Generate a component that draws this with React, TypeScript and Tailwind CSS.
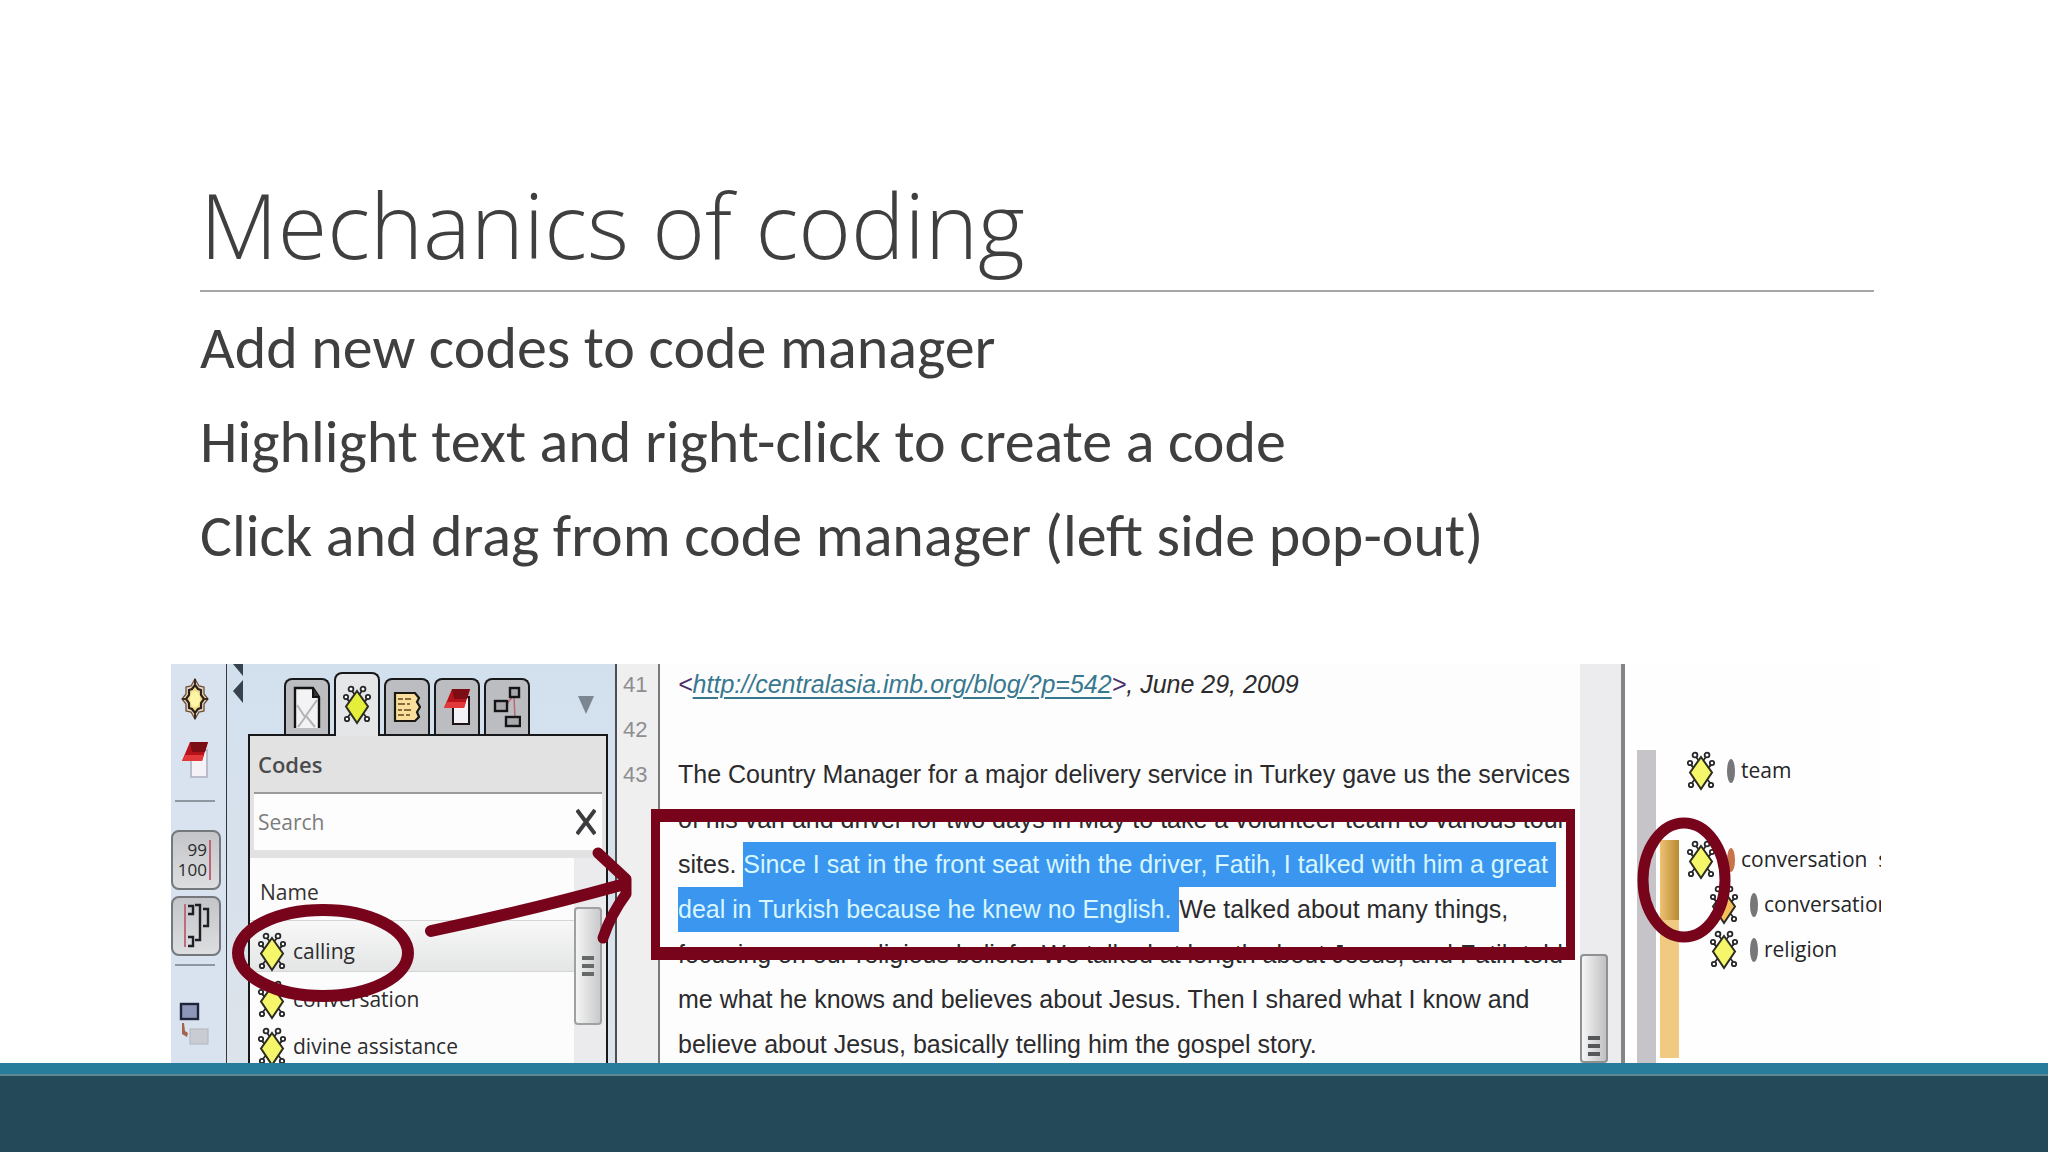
import React from "react";

function CodeIcon({ fill = "#f6f66a" }: { fill?: string }) {
  return (
    <svg viewBox="0 0 28 40" className="h-10 w-7 shrink-0" aria-hidden="true">
      <g fill="#fff" stroke="#26262a" strokeWidth="1.8">
        <path d="M9 6l4 5M19 6l-4 5M3 13l5 5M25 13l-5 5M4 33l5-6M24 33l-5-6" />
        <circle cx="8" cy="4" r="2.4" />
        <circle cx="20" cy="4" r="2.4" />
        <circle cx="3" cy="12" r="2.2" />
        <circle cx="25" cy="12" r="2.2" />
        <circle cx="4" cy="34" r="2.2" />
        <circle cx="24" cy="34" r="2.2" />
      </g>
      <path d="M14 6L25 21.500L14 38L3 21.500Z" fill={fill} stroke="#2c2c22" strokeWidth="2" />
    </svg>
  );
}

function FlowerIcon() {
  return (
    <svg viewBox="0 0 28 42" className="h-[42px] w-7" aria-hidden="true">
      <path d="M14 1L18 8L23 9L23 16L27 21L23 26L23 33L18 34L14 41L10 34L5 33L5 26L1 21L5 16L5 9L10 8Z" fill="#ead9c0" stroke="#6d4f3a" strokeWidth="1.3" />
      <path d="M14 7L17 11L20 12L20 17L23 21L20 25L20 30L17 31L14 35L11 31L8 30L8 25L5 21L8 17L8 12L11 11Z" fill="#f3dc8c" stroke="#2b211b" strokeWidth="2.2" />
      <ellipse cx="14" cy="21" rx="5" ry="8" fill="#fdf6a6" />
      <path d="M14 1V7M14 35V41M1 21H5M23 21H27" stroke="#3a2a20" strokeWidth="2" />
    </svg>
  );
}

function BookIcon({ dark = false }: { dark?: boolean }) {
  return (
    <svg viewBox="0 0 28 40" className="h-10 w-7" aria-hidden="true">
      <rect x="10" y="10" width="16" height="27" fill="#f4f2f6" stroke={dark ? "#1d1416" : "#b9bccb"} strokeWidth="2" />
      <path d="M9 2H27L21 21H1Z" fill="#b5121b" />
      <path d="M9 2H27L24 12H11Z" fill="#7d0d14" />
      <path d="M4 15H23L21 21H1Z" fill="#e2383a" />
    </svg>
  );
}

function PageIcon() {
  return (
    <svg viewBox="0 0 28 42" className="h-[42px] w-7" aria-hidden="true">
      <path d="M2 42V2H20L26 11V42" fill="#f3f3f5" stroke="#141414" strokeWidth="2.4" />
      <path d="M20 2V11H26" fill="#333" stroke="#141414" strokeWidth="2" />
      <path d="M4 19L12 31L24 14M13 30L5 41M13 30L22 41" fill="none" stroke="#b4b4b8" strokeWidth="2" />
    </svg>
  );
}

function MemoIcon() {
  return (
    <svg viewBox="0 0 28 32" className="h-8 w-7" aria-hidden="true">
      <path d="M2 2H22L26 7L24 11L27 16L24 21L26 26L22 30H2Z" fill="#fadf9d" stroke="#1c1812" strokeWidth="2.2" />
      <path d="M5 8h5m2 0h6M5 13h7m2 0h3M5 19h4m2 0h7M5 24h6m2 0h4" stroke="#8c6b3a" strokeWidth="1.8" />
    </svg>
  );
}

function NetworkIcon() {
  return (
    <svg viewBox="0 0 28 42" className="h-[42px] w-7" aria-hidden="true">
      <path d="M14 18L20 10M21 11L22 32" stroke="#b86a72" strokeWidth="1.5" fill="none" />
      <g fill="#a9a9ae" stroke="#151515" strokeWidth="2.4">
        <rect x="17" y="2" width="9" height="9" />
        <rect x="2" y="15" width="12" height="10" />
        <rect x="13" y="31" width="14" height="9" />
      </g>
    </svg>
  );
}

function BracketIcon() {
  return (
    <svg viewBox="0 0 30 46" className="h-[46px] w-[30px]" aria-hidden="true">
      <path d="M4 1V44" stroke="#c06a7c" strokeWidth="2" />
      <path d="M7 3H12V11H7M7 34H12V43H7M14 2H19V37H14M22 6H27V23H22" fill="none" stroke="#1f1f24" strokeWidth="2.4" />
    </svg>
  );
}

function LinkIcon() {
  return (
    <svg viewBox="0 0 30 44" className="h-11 w-[30px]" aria-hidden="true">
      <rect x="2" y="2" width="17" height="15" fill="#8d97b8" stroke="#20243a" strokeWidth="2.4" />
      <path d="M3 21l2 0 1 8 3 2-1 4-5-3z" fill="#a5654d" />
      <rect x="11" y="27" width="18" height="15" fill="#c9ccd2" stroke="#b4b6bd" />
    </svg>
  );
}

const tabs = [
  { label: "Documents", icon: <PageIcon />, active: false },
  { label: "Codes", icon: <CodeIcon fill="#e6ee3c" />, active: true },
  { label: "Memos", icon: <MemoIcon />, active: false },
  { label: "Books", icon: <BookIcon dark />, active: false },
  { label: "Networks", icon: <NetworkIcon />, active: false },
];

const codes = ["calling", "conversation", "divine assistance"];

function Toolbar() {
  return (
    <nav className="flex w-14 shrink-0 flex-col items-start border-r border-[#33383d] bg-[#d8e3ef]" aria-label="Tools">
      <button aria-label="Code manager" className="mt-3.5 ml-2.5"><FlowerIcon /></button>
      <button aria-label="Memo manager" className="mt-5 ml-2.5"><BookIcon /></button>
      <hr className="mt-5 ml-1 w-10 border-t-2 border-[#8d979f]" />
      <button className="mt-7 flex h-[60px] w-[50px] items-center justify-end rounded-lg border-2 border-[#74777b] bg-gradient-to-b from-[#c3c5c8] to-[#dcdee0] pr-2">
        <span className="border-r-2 border-[#c0637a] pr-0.5 text-right font-['Open_Sans',sans-serif] text-[17px] leading-5 text-[#2a2a2c]">
          99<br />100
        </span>
      </button>
      <button aria-label="Margin brackets" className="mt-1.5 flex h-[60px] w-[50px] items-center justify-center rounded-lg border-2 border-[#74777b] bg-gradient-to-b from-[#c3c5c8] to-[#dcdee0]">
        <BracketIcon />
      </button>
      <hr className="mt-2 ml-1 w-10 border-t-2 border-[#8d979f]" />
      <button aria-label="Link" className="mt-9 ml-2"><LinkIcon /></button>
    </nav>
  );
}

function CodeManager() {
  return (
    <section className="flex w-[390px] shrink-0 border-r-2 border-[#4a4f54] bg-gradient-to-b from-[#d2e0ee] to-[#dde3ea]">
      <div className="w-[21px] shrink-0">
        <svg viewBox="0 0 10 40" className="ml-1.5 h-10 w-2.5" aria-hidden="true">
          <path d="M0 0H10V12ZM10 16V39L0 27Z" fill="#36434f" />
        </svg>
      </div>
      <div className="flex w-[360px] flex-col">
        <div className="flex h-[70px] shrink-0 items-end pl-9">
          <div role="tablist" className="flex items-end gap-1">
            {tabs.map((t) => (
              <button
                key={t.label}
                role="tab"
                aria-label={t.label}
                aria-selected={t.active}
                className={
                  t.active
                    ? "z-10 -mb-0.5 flex h-16 w-[46px] items-center justify-center rounded-t-lg border-2 border-b-0 border-[#17181a] bg-[#e4e6e8]"
                    : "flex h-14 w-[46px] items-center justify-center rounded-t-lg border-2 border-b-0 border-[#17181a] bg-[#bcbdc0]"
                }
              >
                {t.icon}
              </button>
            ))}
          </div>
          <button aria-label="More" className="mb-5 ml-12">
            <svg viewBox="0 0 16 18" className="h-[18px] w-4" aria-hidden="true"><path d="M0 0H16L8 18Z" fill="#7b8690" /></svg>
          </button>
        </div>
        <div className="flex flex-1 flex-col border-2 border-b-0 border-[#17181a] bg-[#e2e2e3] font-['Open_Sans',sans-serif]">
          <h2 className="mx-1 h-[58px] border-b-2 border-[#9a9a9c] pl-1 text-[22px] leading-[56px] font-semibold text-[#4a4b4d]">Codes</h2>
          <div className="mx-1 flex h-14 items-center justify-between bg-[#fdfdfd] pr-1.5 pl-1">
            <input aria-label="Search" placeholder="Search" className="w-60 bg-transparent pt-0.5 text-[21px] text-[#777] outline-none placeholder:text-[#7c7c7c]" />
            <button aria-label="Clear search">
              <svg viewBox="0 0 20 28" className="h-7 w-5" aria-hidden="true"><path d="M1 2L19 26M19 2L1 26" stroke="#3c3c3e" strokeWidth="4" /></svg>
            </button>
          </div>
          <div className="mt-2 flex flex-1">
            <div className="flex-1 bg-[#fcfcfc]">
              <div className="h-[62px] pl-2.5 text-[21px] leading-[68px] text-[#333]">Name</div>
              <ul className="text-[21px] text-[#2c2c2e]">
                {codes.map((c, i) => (
                  <li
                    key={c}
                    className={
                      i === 0
                        ? "flex h-[52px] items-center gap-[7px] border-y border-[#d4d6d6] bg-gradient-to-b from-[#f8f8f8] to-[#e4e5e5] pt-3 pl-2"
                        : "flex h-[47px] items-center gap-[7px] pt-2 pl-2"
                    }
                  >
                    <CodeIcon />
                    <span>{c}</span>
                  </li>
                ))}
              </ul>
            </div>
            <div className="w-8 bg-[#ebebed] pt-[49px]">
              <div className="flex h-[118px] w-7 flex-col items-center justify-center gap-1 rounded-sm border-2 border-[#9fa0a2] bg-gradient-to-r from-[#f4f4f4] to-[#c9cacc]">
                <i className="h-1 w-3 bg-[#66686a]" />
                <i className="h-1 w-3 bg-[#66686a]" />
                <i className="h-1 w-3 bg-[#66686a]" />
              </div>
            </div>
          </div>
        </div>
      </div>
    </section>
  );
}

function DocumentPane() {
  return (
    <section className="flex w-[1008px] shrink-0 bg-[#fdfdfd] font-['Liberation_Sans',sans-serif]">
      <ol className="-mt-0.5 w-[43px] shrink-0 border-r-2 border-[#77787a] bg-[#efeff0] pl-1.5 text-[22px] leading-[45px] text-[#8e8e90]">
        <li>41</li>
        <li>42</li>
        <li>43</li>
      </ol>
      <article className="-mt-0.5 w-[920px] pl-[18px] text-[25px] leading-[45px] whitespace-nowrap text-[#2b2b2d]">
        <p className="italic">
          <span className="text-[#4b2f6b]">&lt;</span>
          <a href="#post" className="text-[#38788f] underline decoration-2 underline-offset-4">http://centralasia.imb.org/blog/?p=542</a>
          <span className="text-[#4b2f6b]">&gt;</span>, June 29, 2009
        </p>
        <p className="mt-[45px]">The Country Manager for a major delivery service in Turkey gave us the services</p>
        <p>of his van and driver for two days in May to take a volunteer team to various tour</p>
        <p>
          sites. <mark className="inline-block bg-[#3a96ee] pr-2 align-top text-[#d8f6ff]">Since I sat in the front seat with the driver, Fatih, I talked with him a great</mark>
        </p>
        <p>
          <mark className="inline-block bg-[#3a96ee] pr-2 align-top text-[#d8f6ff]">deal in Turkish because he knew no English.</mark>We talked about many things,
        </p>
        <p>focusing on our religious beliefs. We talked at length about Jesus, and Fatih told</p>
        <p>me what he knows and believes about Jesus. Then I shared what I know and</p>
        <p>believe about Jesus, basically telling him the gospel story.</p>
      </article>
      <div className="flex w-[45px] shrink-0 flex-col border-r-4 border-[#858587] bg-[#ececee] pt-[290px]">
        <div className="flex h-36 w-7 flex-col items-center gap-1 rounded-sm border-2 border-[#8f9092] bg-gradient-to-r from-[#f6f6f6] to-[#bfc0c2] pt-20">
          <i className="h-1 w-3 bg-[#555759]" />
          <i className="h-1 w-3 bg-[#555759]" />
          <i className="h-1 w-3 bg-[#555759]" />
        </div>
      </div>
    </section>
  );
}

function MarginCode({ name, dot = "#77777a", indent = false, fill }: { name: string; dot?: string; indent?: boolean; fill?: string }) {
  return (
    <li className={indent ? "flex h-[45px] items-center pl-[23px]" : "flex h-[45px] items-center"}>
      <CodeIcon fill={fill} />
      <svg viewBox="0 0 8 24" className="ml-3 h-6 w-2 shrink-0" aria-hidden="true"><ellipse cx="4" cy="12" rx="4" ry="12" fill={dot} /></svg>
      <span className="ml-1.5">{name}</span>
    </li>
  );
}

function MarginArea() {
  return (
    <aside className="flex min-w-0 flex-1 overflow-hidden bg-[#fefefe]">
      <div className="mt-[86px] ml-3 w-[19px] shrink-0 bg-[#c6c4c8]" />
      <div className="mt-[176px] ml-1 h-[218px] w-[19px] shrink-0 bg-[#efca80]">
        <div className="h-20 bg-gradient-to-r from-[#eec273] to-[#b98a2f]" />
      </div>
      <ul className="mt-[84px] ml-2 font-['Open_Sans',sans-serif] text-[21px] whitespace-pre text-[#252527]">
        <MarginCode name="team" />
        <li className="h-11" />
        <MarginCode name="conversation  s" dot="#c8734a" />
        <MarginCode name="conversation" indent fill="#f5c05a" />
        <MarginCode name="religion" indent />
      </ul>
    </aside>
  );
}

function Annotations() {
  return (
    <svg viewBox="0 0 1710 399" className="pointer-events-none absolute top-0 left-0 h-[399px] w-[1710px]" aria-hidden="true">
      <g fill="none" stroke="#78041c">
        <ellipse cx="152" cy="289" rx="85" ry="43" strokeWidth="12" />
        <path d="M260 267Q360 246 450 221" strokeWidth="12" strokeLinecap="round" />
        <path d="M427 189L455 215L455 230Q440 250 432 274" strokeWidth="11" strokeLinecap="round" strokeLinejoin="round" />
        <path d="M480 151.500H1404M480 289.500H1404" strokeWidth="13" />
        <path d="M484.500 145V296M1399.500 145V296" strokeWidth="9" />
        <ellipse cx="1513" cy="216" rx="41" ry="57" strokeWidth="11" />
      </g>
    </svg>
  );
}

export default function App() {
  return (
    <main className="flex min-h-screen flex-col bg-white font-['Carlito','Open_Sans',sans-serif] text-[#3f3f3f]">
      <header className="mr-[174px] ml-[200px] border-b-2 border-[#a6a6a6] pt-[158px]">
        <h1 className="font-['Open_Sans',sans-serif] text-[90px] leading-[132px] font-light">Mechanics of coding</h1>
      </header>
      <div className="mr-[174px] ml-[200px] h-[372px] pt-[9px] text-[60px] leading-[94px]">
        <p>Add new codes to code manager</p>
        <p>Highlight text and right-click to create a code</p>
        <p>Click and drag from code manager (left side pop-out)</p>
      </div>
      <figure className="relative mr-[167px] ml-[171px] flex h-[399px] overflow-hidden">
        <Toolbar />
        <CodeManager />
        <DocumentPane />
        <MarginArea />
        <Annotations />
      </figure>
      <footer className="flex-1 border-t-[11px] border-[#277b9b] bg-[#244a5a]">
        <div className="border-t-2 border-[#5f8796]" />
      </footer>
    </main>
  );
}
